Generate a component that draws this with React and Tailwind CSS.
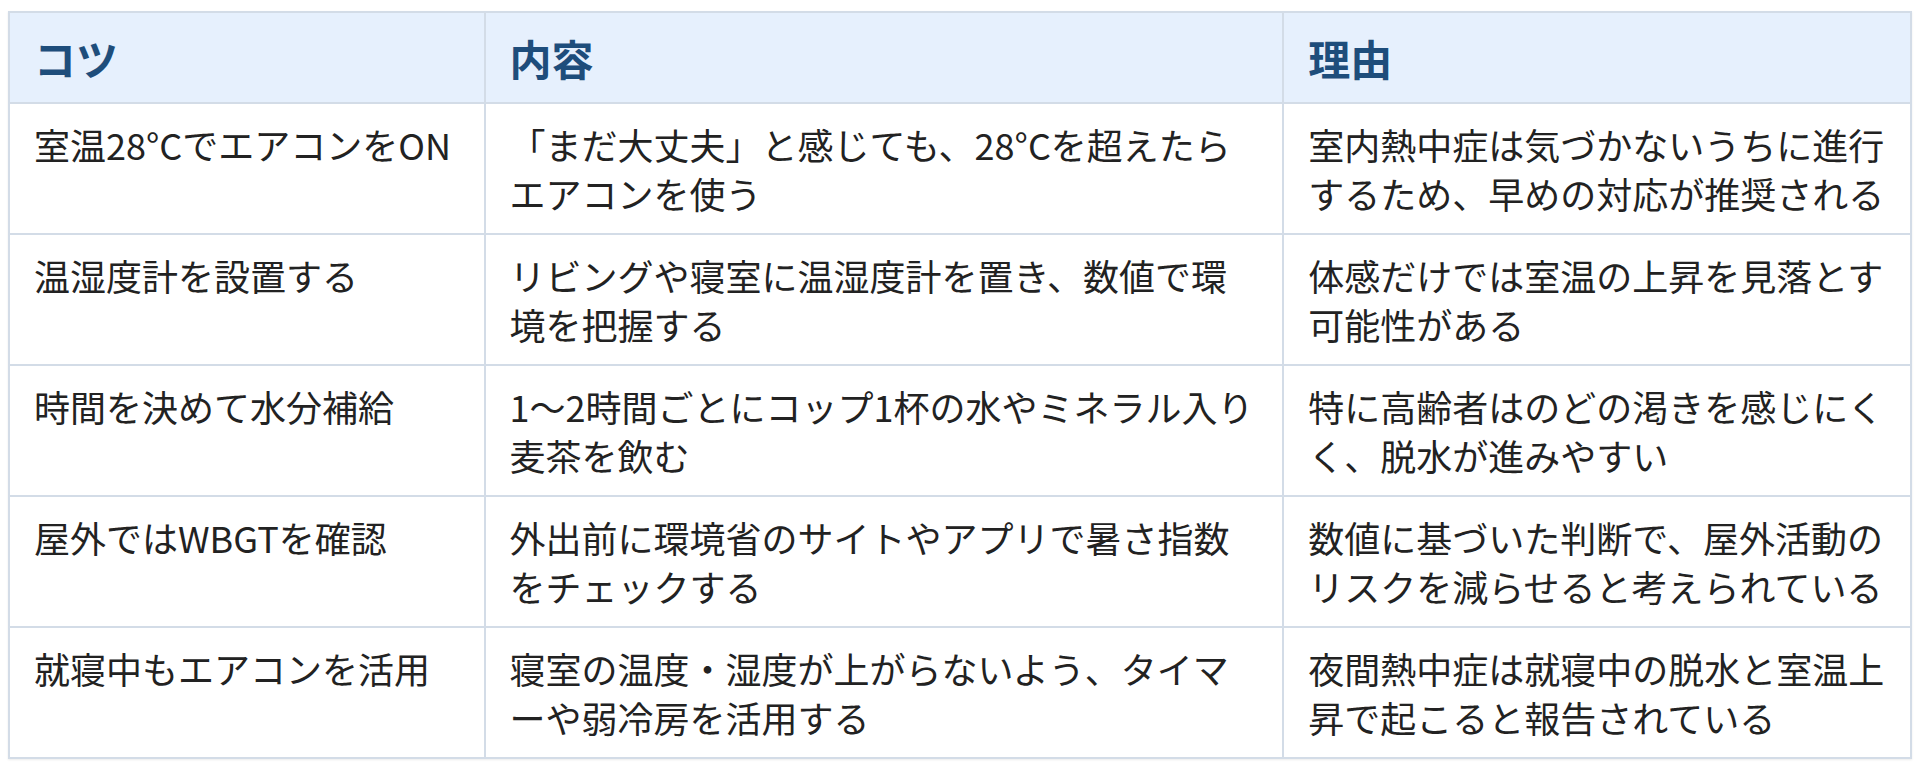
import React from "react";

const rows = [
    {
        tip: "室温28°CでエアコンをON",
        detail: "「まだ大丈夫」と感じても、28°Cを超えたらエアコンを使う",
        reason: "室内熱中症は気づかないうちに進行するため、早めの対応が推奨される",
    },
    {
        tip: "温湿度計を設置する",
        detail: "リビングや寝室に温湿度計を置き、数値で環境を把握する",
        reason: "体感だけでは室温の上昇を見落とす可能性がある",
    },
    {
        tip: "時間を決めて水分補給",
        detail: "1〜2時間ごとにコップ1杯の水やミネラル入り麦茶を飲む",
        reason: "特に高齢者はのどの渇きを感じにくく、脱水が進みやすい",
    },
    {
        tip: "屋外ではWBGTを確認",
        detail: "外出前に環境省のサイトやアプリで暑さ指数をチェックする",
        reason: "数値に基づいた判断で、屋外活動のリスクを減らせると考えられている",
    },
    {
        tip: "就寝中もエアコンを活用",
        detail: "寝室の温度・湿度が上がらないよう、タイマーや弱冷房を活用する",
        reason: "夜間熱中症は就寝中の脱水と室温上昇で起こると報告されている",
    },
];

const headCell = "border-2 border-[#d3dce7] px-6 py-4 text-left align-top text-[42px] leading-[57px] font-bold text-[#1e4d7b]";
const bodyCell = "border-2 border-[#d3dce7] px-6 py-4 align-top text-[36px] leading-[48.5px] text-[#222222]";

export default function App() {
    return (
        <div
            className="min-h-screen bg-white px-2 pt-[11px]"
            style={{ fontFamily: '"Noto Sans CJK JP", "Noto Sans", sans-serif' }}
        >
            <table className="w-full table-fixed border-collapse border-2 border-[#d3dce7] shadow-[0_1px_2px_rgba(0,0,0,0.08)]">
                <colgroup>
                    <col className="w-[25%]" />
                    <col className="w-[42%]" />
                    <col className="w-[33%]" />
                </colgroup>
                <thead>
                    <tr className="bg-[#e6f0fd]">
                        <th className={headCell}>コツ</th>
                        <th className={headCell}>内容</th>
                        <th className={headCell}>理由</th>
                    </tr>
                </thead>
                <tbody>
                    {rows.map((row) => (
                        <tr key={row.tip} className="bg-white">
                            <td className={bodyCell}>{row.tip}</td>
                            <td className={bodyCell}>{row.detail}</td>
                            <td className={bodyCell}>{row.reason}</td>
                        </tr>
                    ))}
                </tbody>
            </table>
        </div>
    );
}
